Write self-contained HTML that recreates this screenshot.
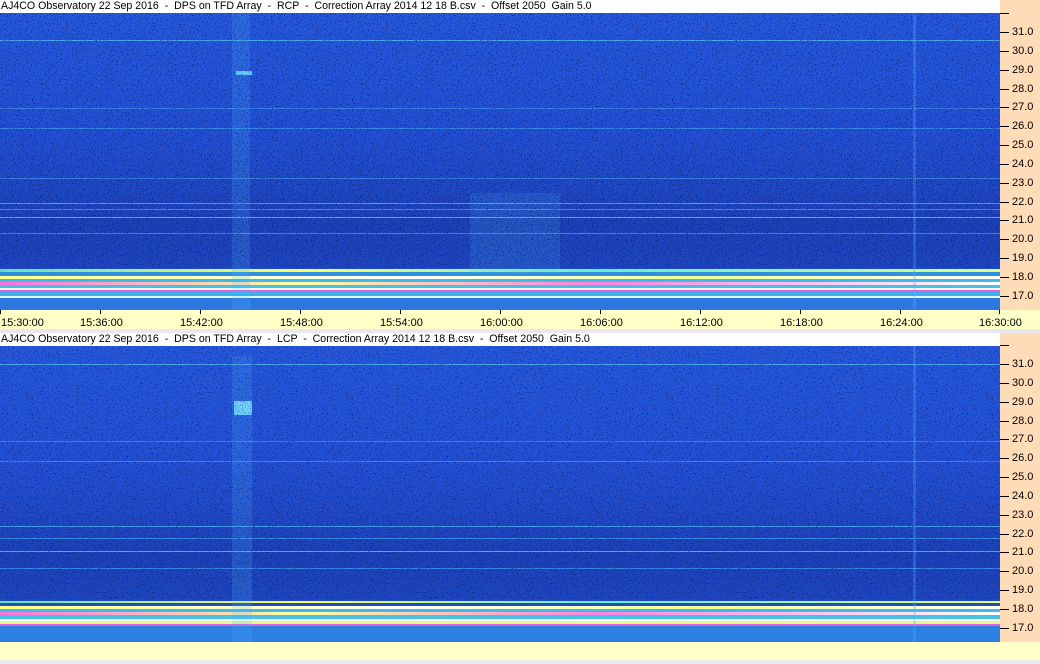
<!DOCTYPE html>
<html><head><meta charset="utf-8">
<style>
*{margin:0;padding:0;box-sizing:border-box}
body{width:1040px;height:664px;position:relative;background:#e8e8ee;font-family:"Liberation Sans",Arial,sans-serif;overflow:hidden}
.title{position:absolute;left:0;width:1000px;height:14px;background:#fff;font-size:10.6px;line-height:13px;color:#000;padding-left:1px;white-space:pre}
.side{position:absolute;left:1000px;width:40px;background:#ffdcb8}
.spec{position:absolute;left:0;width:1000px;height:297px;overflow:hidden;
background:linear-gradient(to bottom,#2558dc 0%,#2250d4 40%,#204ac8 55%,#1c42b8 70%,#1e46c0 85%,#2a6ad8 100%)}
.spec div{position:absolute;left:0;width:1000px}
.noise{position:absolute;left:0;width:1000px;height:297px}
.tick{position:absolute;left:1000px;width:9px;height:1px;background:#000}
.lab{position:absolute;left:1012px;font-size:11px;line-height:12px;color:#000}
.taxis{position:absolute;left:0;top:310px;width:1040px;height:19px;background:#ffffc8}
.tl{position:absolute;top:7px;font-size:11px;line-height:12px;color:#000}
.tt{position:absolute;top:0;width:1px;height:4px;background:#000}
</style></head><body>
<div class="title" style="top:0">AJ4CO Observatory 22 Sep 2016  -  DPS on TFD Array  -  RCP  -  Correction Array 2014 12 18 B.csv  -  Offset 2050  Gain 5.0</div>
<div class="side" style="top:0;height:310px"></div>
<div class="spec" style="top:13px">
 <div style="top:27px;height:1px;background:#4aa8f0"></div>
 <div style="top:95px;height:1px;background:#3a80e8"></div>
 <div style="top:115px;height:1px;background:#3a88e8"></div>
 <div style="top:165px;height:1px;background:#3a80e0"></div>
 <div style="top:190px;height:1px;background:#48a0f0"></div>
 <div style="top:196px;height:1px;background:#3a90e8"></div>
 <div style="top:204px;height:1px;background:#48b0f0"></div>
 <div style="top:220px;height:1px;background:#3a88e8"></div>
 <div style="top:256px;height:3px;background:linear-gradient(90deg,#60e0c0,#ffff60 30%,#60f0d0 60%,#e0ff80)"></div>
 <div style="top:259px;height:4px;background:#3090e0"></div>
 <div style="top:263px;height:3px;background:linear-gradient(90deg,#ffff80,#ffffff 40%,#f0ff90 70%,#ffffff)"></div>
 <div style="top:266px;height:3px;background:#40b8e8"></div>
 <div style="top:269px;height:3px;background:linear-gradient(90deg,#ff70e0,#ffffa0 30%,#ff80e0 60%,#ffffff)"></div>
 <div style="top:272px;height:3px;background:#48c0e0"></div>
 <div style="top:275px;height:2px;background:#ffffff"></div>
 <div style="top:277px;height:2px;background:#e060e0"></div>
 <div style="top:279px;height:4px;background:#40b0e8"></div>
 <div style="top:283px;height:2px;background:#e0ffff"></div>
 <div style="top:285px;height:12px;background:#2c78e0"></div>
 <div style="left:232px;top:0;width:18px;height:297px;background:rgba(80,180,255,.2)"></div>
 <div style="left:470px;top:180px;width:90px;height:80px;background:rgba(80,200,255,.15)"></div>
 <div style="left:236px;top:58px;width:16px;height:4px;background:#60c8ff"></div>
 <div style="left:913px;top:0;width:3px;height:297px;background:rgba(80,180,255,.3)"></div>
</div>
<div class="taxis">
 <div class="tt" style="left:0"></div><div class="tl" style="left:1px">15:30:00</div>
 <div class="tt" style="left:100px"></div><div class="tl" style="left:80px">15:36:00</div>
 <div class="tt" style="left:200px"></div><div class="tl" style="left:180px">15:42:00</div>
 <div class="tt" style="left:300px"></div><div class="tl" style="left:280px">15:48:00</div>
 <div class="tt" style="left:400px"></div><div class="tl" style="left:380px">15:54:00</div>
 <div class="tt" style="left:500px"></div><div class="tl" style="left:480px">16:00:00</div>
 <div class="tt" style="left:600px"></div><div class="tl" style="left:580px">16:06:00</div>
 <div class="tt" style="left:700px"></div><div class="tl" style="left:680px">16:12:00</div>
 <div class="tt" style="left:800px"></div><div class="tl" style="left:780px">16:18:00</div>
 <div class="tt" style="left:900px"></div><div class="tl" style="left:880px">16:24:00</div>
 <div class="tt" style="left:999px"></div><div class="tl" style="left:979px">16:30:00</div>
</div>
<div class="title" style="top:333px">AJ4CO Observatory 22 Sep 2016  -  DPS on TFD Array  -  LCP  -  Correction Array 2014 12 18 B.csv  -  Offset 2050  Gain 5.0</div>
<div class="side" style="top:333px;height:309px"></div>
<div class="spec" style="top:346px">
 <div style="top:18px;height:1px;background:#4aa8f0"></div>
 <div style="top:95px;height:1px;background:#3a80e8"></div>
 <div style="top:115px;height:1px;background:#3a88e8"></div>
 <div style="top:180px;height:1px;background:#48a0f0"></div>
 <div style="top:192px;height:1px;background:#3a90e8"></div>
 <div style="top:205px;height:1px;background:#48b0f0"></div>
 <div style="top:222px;height:1px;background:#3a88e8"></div>
 <div style="top:255px;height:2px;background:linear-gradient(90deg,#60e0c0,#ffff60 30%,#60f0d0 60%,#e0ff80)"></div>
 <div style="top:260px;height:3px;background:linear-gradient(90deg,#ffff80,#ffffff 40%,#f0ff90 70%,#ffffff)"></div>
 <div style="top:263px;height:3px;background:#40b8e8"></div>
 <div style="top:266px;height:3px;background:linear-gradient(90deg,#ff70e0,#ffffa0 30%,#ff80e0 60%,#ffffff)"></div>
 <div style="top:269px;height:4px;background:#48c0e0"></div>
 <div style="top:273px;height:2px;background:#ffffff"></div>
 <div style="top:275px;height:3px;background:#e0ff80"></div>
 <div style="top:278px;height:2px;background:#e060e0"></div>
 <div style="top:280px;height:17px;background:#2c80e0"></div>
 <div style="left:232px;top:10px;width:20px;height:287px;background:rgba(80,180,255,.2)"></div>
 <div style="left:234px;top:55px;width:18px;height:14px;background:#70d0ff"></div>
 <div style="left:913px;top:0;width:3px;height:297px;background:rgba(80,180,255,.3)"></div>
</div>
<div style="position:absolute;left:0;top:642px;width:1040px;height:18px;background:#ffffc8"></div>
<svg class="noise" style="top:13px" width="1000" height="255"><filter id="n1" x="0" y="0" width="100%" height="100%"><feTurbulence type="fractalNoise" baseFrequency="0.8" numOctaves="1" seed="3"/><feColorMatrix values="0 0 0 0 0  0 0 0 0 0  0 0 0 0 0.05  3.5 0 0 0 -2.0"/></filter><rect width="1000" height="255" filter="url(#n1)" fill="#000"/></svg>
<svg class="noise" style="top:346px" width="1000" height="253"><filter id="n2" x="0" y="0" width="100%" height="100%"><feTurbulence type="fractalNoise" baseFrequency="0.8" numOctaves="1" seed="7"/><feColorMatrix values="0 0 0 0 0  0 0 0 0 0  0 0 0 0 0.05  3.5 0 0 0 -2.0"/></filter><rect width="1000" height="253" filter="url(#n2)" fill="#000"/></svg>
<div class="tick" style="top:13px"></div>
<div class="tick" style="top:32px"></div><div class="lab" style="top:26px">31.0</div>
<div class="tick" style="top:51px"></div><div class="lab" style="top:45px">30.0</div>
<div class="tick" style="top:70px"></div><div class="lab" style="top:64px">29.0</div>
<div class="tick" style="top:89px"></div><div class="lab" style="top:83px">28.0</div>
<div class="tick" style="top:107px"></div><div class="lab" style="top:101px">27.0</div>
<div class="tick" style="top:126px"></div><div class="lab" style="top:120px">26.0</div>
<div class="tick" style="top:145px"></div><div class="lab" style="top:139px">25.0</div>
<div class="tick" style="top:164px"></div><div class="lab" style="top:158px">24.0</div>
<div class="tick" style="top:183px"></div><div class="lab" style="top:177px">23.0</div>
<div class="tick" style="top:202px"></div><div class="lab" style="top:196px">22.0</div>
<div class="tick" style="top:220px"></div><div class="lab" style="top:214px">21.0</div>
<div class="tick" style="top:239px"></div><div class="lab" style="top:233px">20.0</div>
<div class="tick" style="top:258px"></div><div class="lab" style="top:252px">19.0</div>
<div class="tick" style="top:277px"></div><div class="lab" style="top:271px">18.0</div>
<div class="tick" style="top:296px"></div><div class="lab" style="top:290px">17.0</div>
<div class="tick" style="top:345px"></div>
<div class="tick" style="top:364px"></div><div class="lab" style="top:358px">31.0</div>
<div class="tick" style="top:383px"></div><div class="lab" style="top:377px">30.0</div>
<div class="tick" style="top:402px"></div><div class="lab" style="top:396px">29.0</div>
<div class="tick" style="top:421px"></div><div class="lab" style="top:415px">28.0</div>
<div class="tick" style="top:439px"></div><div class="lab" style="top:433px">27.0</div>
<div class="tick" style="top:458px"></div><div class="lab" style="top:452px">26.0</div>
<div class="tick" style="top:477px"></div><div class="lab" style="top:471px">25.0</div>
<div class="tick" style="top:496px"></div><div class="lab" style="top:490px">24.0</div>
<div class="tick" style="top:515px"></div><div class="lab" style="top:509px">23.0</div>
<div class="tick" style="top:534px"></div><div class="lab" style="top:528px">22.0</div>
<div class="tick" style="top:552px"></div><div class="lab" style="top:546px">21.0</div>
<div class="tick" style="top:571px"></div><div class="lab" style="top:565px">20.0</div>
<div class="tick" style="top:590px"></div><div class="lab" style="top:584px">19.0</div>
<div class="tick" style="top:609px"></div><div class="lab" style="top:603px">18.0</div>
<div class="tick" style="top:628px"></div><div class="lab" style="top:622px">17.0</div>
</body></html>
